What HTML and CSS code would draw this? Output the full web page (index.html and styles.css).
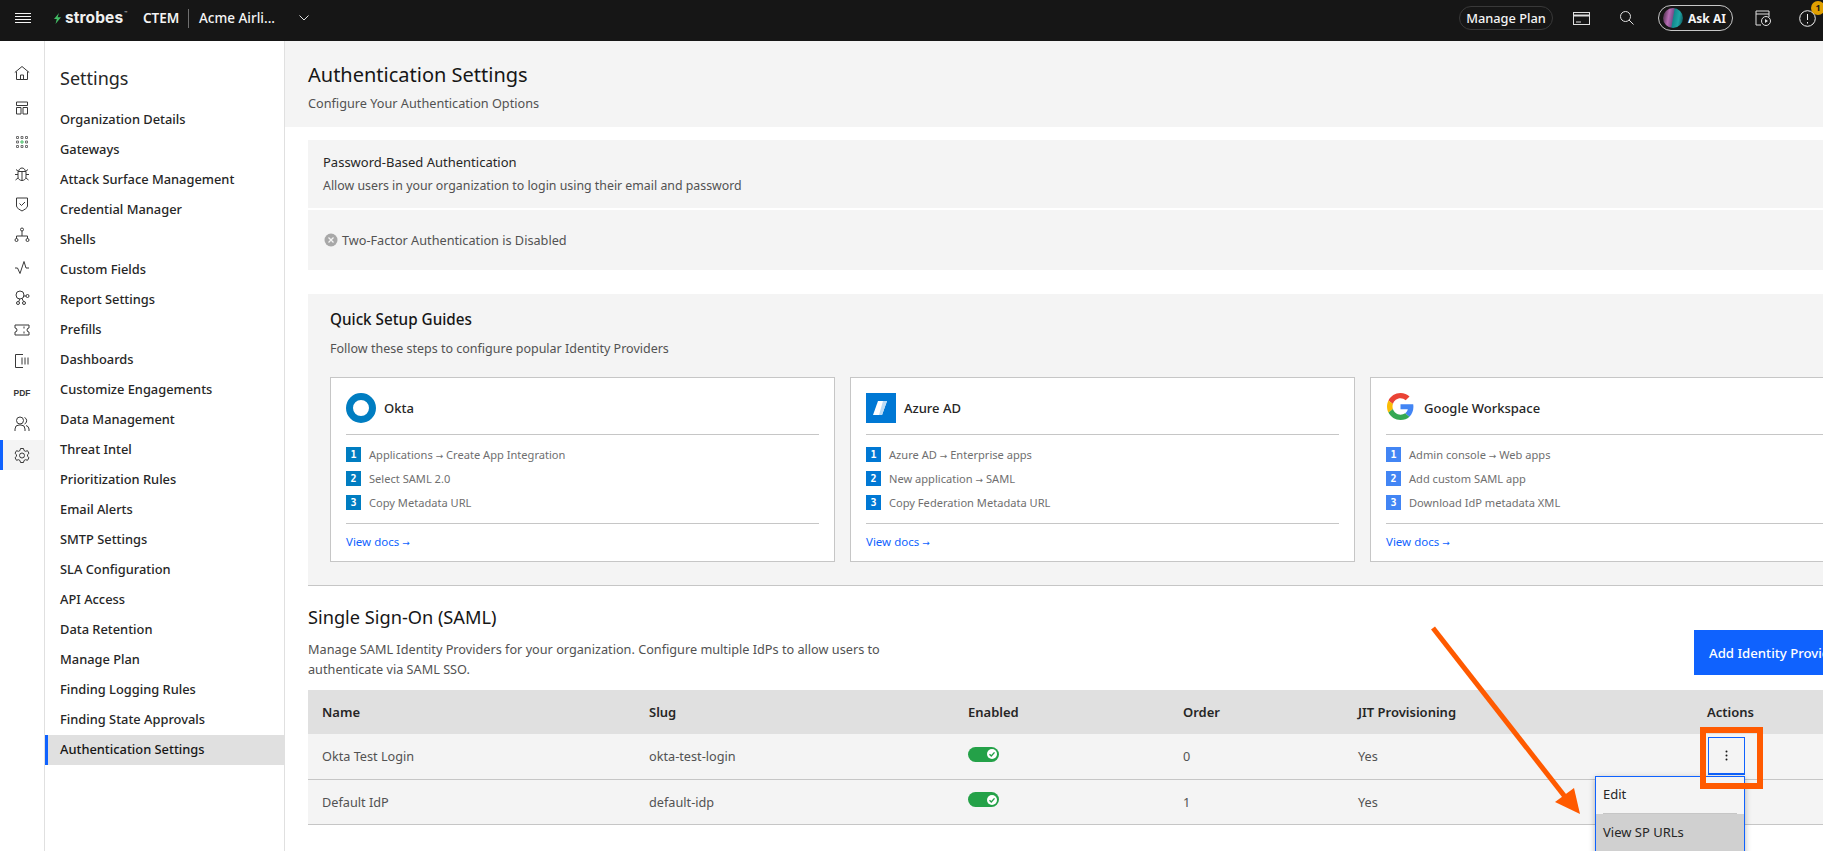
FILE: index.html
```html
<!DOCTYPE html>
<html lang="en">
<head>
<meta charset="utf-8">
<title>Authentication Settings</title>
<link rel="stylesheet" href="styles.css">
</head>
<body>
<div class="app">
  <header class="topbar">
    <div class="top-left">
      <svg class="burger" width="16" height="11" viewBox="0 0 16 11" fill="none" stroke="#f4f4f4"><path d="M0 .5h16M0 3.500h16M0 6.500h16M0 9.500h16"/></svg>
      <div class="logo">
        <svg width="7" height="11" viewBox="0 0 7 11"><path d="M5 0 3.600 4.300H7L1.500 11l1.300-5H0z" fill="#42be65"/></svg>
        <span class="logo-text">strobes</span>
        <span class="logo-tm">™</span>
      </div>
      <span class="product">CTEM</span>
      <span class="top-divider"></span>
      <span class="org">Acme Airli...</span>
      <svg class="chev" width="10" height="6" viewBox="0 0 10 6" fill="none" stroke="#e0e0e0"><path d="M.5.5 5 5 9.500.5"/></svg>
    </div>
    <div class="top-right">
      <button class="plan">Manage Plan</button>
      <svg class="ic-card" width="17" height="13" viewBox="0 0 17 13" fill="none" stroke="#e0e0e0"><rect x=".5" y=".5" width="16" height="12"/><path d="M1 3.500h15" stroke-width="2"/><path d="M3 10h5"/></svg>
      <svg class="ic-search" width="14" height="14" viewBox="0 0 14 14" fill="none" stroke="#e0e0e0"><circle cx="5.500" cy="5.500" r="5"/><path d="m9 9 4.500 4.500"/></svg>
      <button class="ask"><span class="orb"></span>Ask AI</button>
      <svg class="ic-play" width="16" height="16" viewBox="0 0 16 16" fill="none" stroke="#e0e0e0"><path d="M6 15H1V1h13v6M1 4h13"/><circle cx="11" cy="11" r="4.500"/><path d="M10 9v4l3-2z" fill="#e0e0e0" stroke="none"/></svg>
      <div class="alert">
        <svg width="17" height="17" viewBox="0 0 17 17" fill="none" stroke="#f4f4f4"><circle cx="8.500" cy="8.500" r="7.800"/><path d="M8.500 4v6M8.500 12v1.500"/></svg>
        <span class="badge">1</span>
      </div>
    </div>
  </header>

  <div class="body">
    <nav class="rail">
      <a class="rail-item rail-tall"><svg viewBox="0 0 16 16" fill="none" stroke="#393939"><path d="M.8 7.500 8 1.500l7.200 6M2.500 6.500v8h11v-8M6.500 14.500v-4.500h3v4.500"/></svg></a>
      <a class="rail-item rail-tall"><svg viewBox="0 0 16 16" fill="none" stroke="#393939"><path d="M2.500 2h11v3.500h-11zM2.500 7.500h4.500v6.500h-4.500zM9 7.500h4.500v6.500H9z"/></svg></a>
      <a class="rail-item rail-tall"><svg viewBox="0 0 16 16" fill="none" stroke="#6f6f6f"><path d="M2.500 2.500h2v2h-2zM7 2.500h2v2H7zM11.500 2.500h2v2h-2zM2.500 7h2v2h-2zM11.500 7h2v2h-2zM2.500 11.500h2v2h-2zM7 11.500h2v2H7zM11.500 11.500h2v2h-2z"/><path d="M7 7h2v2H7z" stroke="#42be65"/></svg></a>
      <a class="rail-item rail-short"><svg viewBox="0 0 16 16" fill="none" stroke="#393939"><path d="M4.500 5.500C5 3 6.500 2 8 2s3 1 3.500 3.500zM4 5.500h8v5.500c0 2-2 3.500-4 3.500s-4-1.500-4-3.500zM8 5.500v9M4 8.500H1M15 8.500h-3M4 12l-2.500 2M12 12l2.500 2M4.500 5.500 2 3.500M11.500 5.500l2.500-2"/></svg></a>
      <a class="rail-item"><svg viewBox="0 0 16 16" fill="none" stroke="#393939"><path d="M2.500 2h11v8c0 2-3 3.500-5.500 5-2.500-1.500-5.500-3-5.500-5z"/><path d="m5.500 7.500 2 2 3.500-3.500"/></svg></a>
      <a class="rail-item"><svg viewBox="0 0 16 16" fill="none" stroke="#393939"><circle cx="8" cy="2.500" r="1.500"/><circle cx="2.500" cy="13" r="1.500"/><circle cx="13.500" cy="13" r="1.500"/><path d="M8 4v5M2.500 11.500V9h11v2.500"/></svg></a>
      <a class="rail-item"><svg viewBox="0 0 16 16" fill="none" stroke="#393939"><path d="M1 9h2.500L6 14.500 10 2.500l2 6.500h3"/></svg></a>
      <a class="rail-item"><svg viewBox="0 0 16 16" fill="none" stroke="#393939"><circle cx="6" cy="5" r="4"/><circle cx="13.500" cy="6" r="1.500"/><circle cx="4" cy="13" r="1.500"/><circle cx="10" cy="13" r="1.500"/><path d="m5 11.500.5-2.500M9.500 11.500 8 8.500M9.500 6 12 6"/></svg></a>
      <a class="rail-item"><svg viewBox="0 0 16 16" fill="none" stroke="#393939"><path d="M1 3h14v3a2 2 0 0 0 0 4v3H1v-3a2 2 0 0 0 0-4zM10 4.500v2M10 9.500v2"/></svg></a>
      <a class="rail-item"><svg viewBox="0 0 16 16" fill="none" stroke="#393939"><path d="M9 14.500H1.500v-13H9M8 4.500v7M11 4.500v7M14 4.500v7"/></svg></a>
      <a class="rail-item rail-pdf">PDF</a>
      <a class="rail-item"><svg viewBox="0 0 16 16" fill="none" stroke="#393939"><circle cx="6" cy="4.500" r="3.500"/><path d="M1 15v-2a4 4 0 0 1 4-4h2a4 4 0 0 1 4 4v2M10.500 1.500a3.500 3.500 0 0 1 0 6.500M12 9.500a4 4 0 0 1 3 3.500v2"/></svg></a>
      <a class="rail-item rail-active"><svg viewBox="0 0 16 16" fill="none" stroke="#393939"><path d="m6.500 1.500h3l.5 2 1.500.8 2-.6 1.500 2.600-1.500 1.400v1.600l1.500 1.400-1.500 2.600-2-.6-1.500.8-.5 2h-3l-.5-2-1.500-.8-2 .6-1.500-2.600 1.500-1.400V7.700L1 6.300l1.500-2.600 2 .6L6 3.500z"/><circle cx="8" cy="8.500" r="2.500"/></svg></a>
    </nav>

    <aside class="settings-nav">
      <h2 class="settings-title">Settings</h2>
      <a class="nav-item">Organization Details</a>
      <a class="nav-item">Gateways</a>
      <a class="nav-item">Attack Surface Management</a>
      <a class="nav-item">Credential Manager</a>
      <a class="nav-item">Shells</a>
      <a class="nav-item">Custom Fields</a>
      <a class="nav-item">Report Settings</a>
      <a class="nav-item">Prefills</a>
      <a class="nav-item">Dashboards</a>
      <a class="nav-item">Customize Engagements</a>
      <a class="nav-item">Data Management</a>
      <a class="nav-item">Threat Intel</a>
      <a class="nav-item">Prioritization Rules</a>
      <a class="nav-item">Email Alerts</a>
      <a class="nav-item">SMTP Settings</a>
      <a class="nav-item">SLA Configuration</a>
      <a class="nav-item">API Access</a>
      <a class="nav-item">Data Retention</a>
      <a class="nav-item">Manage Plan</a>
      <a class="nav-item">Finding Logging Rules</a>
      <a class="nav-item">Finding State Approvals</a>
      <a class="nav-item nav-active">Authentication Settings</a>
    </aside>

    <main class="main">
      <div class="page-head">
        <h1 class="page-title">Authentication Settings</h1>
        <p class="page-sub">Configure Your Authentication Options</p>
      </div>
      <div class="content">
        <section class="password">
          <div class="pw-top">
            <div class="pw-title">Password-Based Authentication</div>
            <div class="pw-desc">Allow users in your organization to login using their email and password</div>
          </div>
          <div class="pw-bottom">
            <svg width="14" height="14" viewBox="0 0 14 14"><circle cx="7" cy="7" r="6.500" fill="#a8a8a8"/><path d="m4.500 4.500 5 5M9.500 4.500l-5 5" stroke="#f4f4f4" stroke-width="1.300"/></svg>
            <span>Two-Factor Authentication is Disabled</span>
          </div>
        </section>

        <section class="guides">
          <h3 class="guides-title">Quick Setup Guides</h3>
          <p class="guides-sub">Follow these steps to configure popular Identity Providers</p>
          <div class="cards">
            <article class="card">
              <div class="card-head">
                <span class="card-logo"><svg width="30" height="30" viewBox="0 0 30 30"><circle cx="15" cy="15" r="11.500" fill="none" stroke="#007dc1" stroke-width="7"/></svg></span>
                <span class="card-name">Okta</span>
              </div>
              <ol class="steps okta">
                <li><b>1</b><span>Applications <i class="arr">→</i> Create App Integration</span></li>
                <li><b>2</b><span>Select SAML 2.0</span></li>
                <li><b>3</b><span>Copy Metadata URL</span></li>
              </ol>
              <a class="docs">View docs <i class="arr">→</i></a>
            </article>
            <article class="card">
              <div class="card-head">
                <span class="card-logo"><svg width="30" height="30" viewBox="0 0 30 30"><rect width="30" height="30" fill="#0078d4"/><path d="M12 8h9l-5 14H7z" fill="#fff"/><path d="M17 8h4l-5 14h-3z" fill="#bcdcf5"/></svg></span>
                <span class="card-name">Azure AD</span>
              </div>
              <ol class="steps azure">
                <li><b>1</b><span>Azure AD <i class="arr">→</i> Enterprise apps</span></li>
                <li><b>2</b><span>New application <i class="arr">→</i> SAML</span></li>
                <li><b>3</b><span>Copy Federation Metadata URL</span></li>
              </ol>
              <a class="docs">View docs <i class="arr">→</i></a>
            </article>
            <article class="card">
              <div class="card-head">
                <span class="card-logo"><svg class="g-logo" width="27" height="27" viewBox="0 0 48 48"><path fill="#EA4335" d="M24 9.500c3.540 0 6.710 1.220 9.210 3.600l6.850-6.850C35.900 2.380 30.470 0 24 0 14.620 0 6.510 5.380 2.560 13.220l7.980 6.190C12.430 13.720 17.740 9.500 24 9.500z"/><path fill="#4285F4" d="M46.980 24.550c0-1.570-.15-3.090-.38-4.550H24v9.020h12.940c-.58 2.960-2.260 5.480-4.780 7.180l7.730 6c4.510-4.180 7.090-10.360 7.090-17.650z"/><path fill="#FBBC05" d="M10.530 28.590c-.48-1.450-.76-2.990-.76-4.590s.27-3.140.76-4.590l-7.980-6.190C.92 16.460 0 20.120 0 24c0 3.880.92 7.540 2.560 10.780l7.970-6.190z"/><path fill="#34A853" d="M24 48c6.480 0 11.930-2.130 15.890-5.810l-7.730-6c-2.150 1.450-4.920 2.300-8.160 2.300-6.260 0-11.570-4.220-13.470-9.910l-7.980 6.190C6.510 42.620 14.620 48 24 48z"/></svg></span>
                <span class="card-name">Google Workspace</span>
              </div>
              <ol class="steps google">
                <li><b>1</b><span>Admin console <i class="arr">→</i> Web apps</span></li>
                <li><b>2</b><span>Add custom SAML app</span></li>
                <li><b>3</b><span>Download IdP metadata XML</span></li>
              </ol>
              <a class="docs">View docs <i class="arr">→</i></a>
            </article>
          </div>
        </section>

        <section class="sso">
          <div class="sso-head">
            <div class="sso-text">
              <h2 class="sso-title">Single Sign-On (SAML)</h2>
              <p class="sso-desc">Manage SAML Identity Providers for your organization. Configure multiple IdPs to allow users to authenticate via SAML SSO.</p>
            </div>
            <button class="add-btn">Add Identity Provider</button>
          </div>
          <table class="idp">
            <thead>
              <tr>
                <th class="c-name">Name</th>
                <th class="c-slug">Slug</th>
                <th class="c-enabled">Enabled</th>
                <th class="c-order">Order</th>
                <th class="c-jit">JIT Provisioning</th>
                <th class="c-actions">Actions</th>
              </tr>
            </thead>
            <tbody>
              <tr>
                <td>Okta Test Login</td>
                <td>okta-test-login</td>
                <td><span class="toggle"><span class="knob"><svg width="10" height="10" viewBox="0 0 10 10" fill="none" stroke="#24a148" stroke-width="1.400"><path d="m2.500 5.200 1.800 1.800 3.200-3.600"/></svg></span></span></td>
                <td>0</td>
                <td>Yes</td>
                <td class="a-cell"><button class="kebab"><svg width="3" height="11" viewBox="0 0 3 11" fill="#161616"><circle cx="1.500" cy="1.500" r="1"/><circle cx="1.500" cy="5.500" r="1"/><circle cx="1.500" cy="9.500" r="1"/></svg></button></td>
              </tr>
              <tr>
                <td>Default IdP</td>
                <td>default-idp</td>
                <td><span class="toggle"><span class="knob"><svg width="10" height="10" viewBox="0 0 10 10" fill="none" stroke="#24a148" stroke-width="1.400"><path d="m2.500 5.200 1.800 1.800 3.200-3.600"/></svg></span></span></td>
                <td>1</td>
                <td>Yes</td>
                <td></td>
              </tr>
            </tbody>
          </table>
        </section>
      </div>
    </main>
  </div>

  <div class="menu">
    <div class="menu-item">Edit</div>
    <div class="menu-sep"></div>
    <div class="menu-item menu-hover">View SP URLs</div>
  </div>
  <span class="note-box"></span>
  <svg class="note-arrow" width="1823" height="851" viewBox="0 0 1823 851"><path d="M1433 628 1566 798" stroke="#ff5a00" stroke-width="5" fill="none"/><path d="M1580 814 1555 802 1574 788z" fill="#ff5a00"/></svg>
</div>
</body>
</html>
```

FILE: styles.css
```css
* { box-sizing: border-box; }
html, body { margin: 0; height: 851px; overflow: hidden; }
body { font-family: "Noto Sans", Roboto, sans-serif; color: #161616; background: #fff; font-size: 13px; }
h1, h2, h3, p, ol { margin: 0; padding: 0; }
button { font-family: inherit; }

.app { position: relative; width: 1823px; height: 851px; overflow: hidden; display: flex; flex-direction: column; }

.topbar { flex: none; height: 41px; padding-bottom: 5px; background: #161616; display: flex; justify-content: space-between; align-items: center; color: #f4f4f4; }
.top-left { display: flex; align-items: center; padding-left: 15px; }
.burger { margin-right: 23px; }
.logo { display: flex; align-items: center; gap: 4px; width: 89px; }
.logo-text { font: 700 15.500px/20px Inter, sans-serif; color: #f0f0f0; letter-spacing: .1px; }
.logo-tm { font-size: 4px; line-height: 4px; align-self: flex-start; margin: 3px 0 0 -3px; color: #c6c6c6; }
.product { font-size: 13.500px; font-weight: 600; width: 45px; }
.top-divider { width: 1px; height: 19px; background: #6f6f6f; margin-right: 10px; }
.org { font-size: 13.500px; font-weight: 500; width: 100px; }
.top-right { display: flex; align-items: center; }
.plan { width: 94px; height: 24px; border: 1px solid #393939; border-radius: 12px; background: transparent; color: #f4f4f4; font-size: 12.800px; font-weight: 500; padding: 0; margin-right: 20px; }
.ic-card { margin-right: 30px; }
.ic-search { margin-right: 24px; }
.ask { width: 75px; height: 26px; border: 1px solid #c6c6c6; border-radius: 13px; background: transparent; color: #f4f4f4; font-size: 12px; font-weight: 700; padding: 0 0 0 4px; display: flex; align-items: center; gap: 5px; margin-right: 22px; }
.orb { width: 20px; height: 20px; border-radius: 50%; background: linear-gradient(100deg, #3a2438 0%, #b86db5 30%, #7a4f8c 48%, #12888c 52%, #1fa6a6 75%, #0c4a50 100%); }
.ic-play { margin-right: 28px; }
.alert { position: relative; width: 24px; height: 17px; }
.badge { position: absolute; left: 12px; top: -9px; width: 14px; height: 14px; border-radius: 50%; background: #e0a000; color: #161616; font-size: 9px; font-weight: 700; line-height: 14px; text-align: center; }

.body { flex: 1; display: flex; min-height: 0; }

.rail { flex: none; width: 45px; border-right: 1px solid #e0e0e0; padding-top: 14.750px; display: flex; flex-direction: column; }
.rail-item { flex: none; width: 44px; height: 31.470px; display: flex; align-items: center; justify-content: center; }
.rail-tall { height: 34.500px; }
.rail-short { height: 29px; }
.rail-item svg { width: 16px; height: 16px; }
.rail-pdf { font: 700 8.500px/1 "Liberation Sans", sans-serif; color: #393939; }
.rail-active { height: 30px; background: #f4f4f4; border-left: 3px solid #0f62fe; padding-right: 3px; }

.settings-nav { flex: none; width: 240px; border-right: 1px solid #e0e0e0; padding-top: 25px; display: flex; flex-direction: column; }
.settings-title { font-size: 18px; font-weight: 400; line-height: 25px; color: #262626; padding-left: 15px; margin-bottom: 14px; }
.nav-item { height: 30px; line-height: 28px; padding-left: 15px; font-size: 12.850px; font-weight: 500; color: #262626; flex: none; }
.nav-active { background: #e0e0e0; border-left: 3px solid #0f62fe; padding-left: 12px; color: #161616; }

.main { flex: none; width: 1640px; }
.page-head { height: 86px; background: #f4f4f4; padding: 20px 0 0 23px; }
.page-title { font-size: 20px; font-weight: 400; line-height: 28px; color: #161616; }
.page-sub { font-size: 12.700px; line-height: 18px; color: #525252; margin-top: 5px; }

.content { padding: 13px 0 0 23px; }
.password { background: #f4f4f4; height: 130px; }
.pw-top { height: 70px; padding: 12px 15px 0; border-bottom: 2px solid #fff; }
.pw-title { font-size: 13px; line-height: 20px; color: #262626; }
.pw-desc { font-size: 12.350px; line-height: 20px; color: #525252; margin-top: 4px; }
.pw-bottom { display: flex; align-items: center; gap: 4px; padding: 20px 15px 0 16px; font-size: 12.700px; line-height: 20px; color: #525252; }

.guides { margin-top: 24px; height: 292px; background: #f4f4f4; border-bottom: 1px solid #c6c6c6; padding: 14px 0 0 22px; }
.guides-title { font-size: 15.250px; font-weight: 500; line-height: 22px; color: #161616; }
.guides-sub { font-size: 12.500px; line-height: 18px; color: #525252; margin-top: 10px; }
.cards { display: flex; gap: 15px; margin-top: 19px; }
.card { flex: none; width: 505px; height: 185px; background: #fff; border: 1px solid #c6c6c6; padding: 15px 15px 0; }
.card-head { display: flex; align-items: center; gap: 8px; height: 42px; padding-bottom: 12px; border-bottom: 1px solid #c6c6c6; }
.card-logo { display: flex; width: 30px; height: 30px; }
.g-logo { margin-left: 1px; }
.card-name { font-size: 13px; font-weight: 500; color: #262626; }
.steps { list-style: none; height: 89px; padding-top: 12px; border-bottom: 1px solid #c6c6c6; }
.steps li { display: flex; align-items: center; gap: 8px; height: 15px; margin-bottom: 9px; font-size: 11.100px; color: #6f6f6f; }
.steps b { flex: none; width: 15px; height: 15px; color: #fff; font: 700 10px/15px "DejaVu Sans Mono", monospace; text-align: center; }
.okta b { background: #007dc1; }
.azure b { background: #0078d4; }
.google b { background: #4285f4; }
.arr { font-family: "DejaVu Sans", sans-serif; font-style: normal; font-size: 9px; }
.docs { display: block; font-size: 11.500px; line-height: 18px; color: #0f62fe; margin-top: 9px; }

.sso { padding-top: 16px; }
.sso-head { display: flex; justify-content: space-between; align-items: flex-start; width: 1609px; height: 88px; }
.sso-title { font-size: 18.200px; font-weight: 400; line-height: 30px; color: #161616; }
.sso-desc { width: 600px; font-size: 12.700px; line-height: 20px; color: #525252; margin-top: 7px; }
.add-btn { margin-top: 28px; width: 200px; height: 45px; border: 0; background: #0f62fe; color: #fff; font-size: 13.200px; font-weight: 500; text-align: left; padding: 0 0 0 15px; flex: none; margin-right: 23px; }
.idp { border-collapse: collapse; table-layout: fixed; width: 1585px; }
.idp th { height: 44px; background: #e0e0e0; font-size: 13px; font-weight: 600; color: #262626; text-align: left; padding: 0 0 0 14px; }
.idp td { height: 45px; background: #f4f4f4; border-bottom: 1px solid #c6c6c6; font-size: 12.700px; color: #525252; padding: 0 0 0 14px; }
.c-name { width: 327px; }
.c-slug { width: 319px; }
.c-enabled { width: 215px; }
.c-order { width: 175px; }
.c-jit { width: 349px; }
.toggle { display: block; position: relative; top: -2px; width: 31px; height: 15px; border-radius: 8px; background: #24a148; }
.knob { position: absolute; right: 2px; top: 2.500px; width: 10px; height: 10px; border-radius: 50%; background: #fff; display: flex; align-items: center; justify-content: center; }
.kebab { display: flex; align-items: center; justify-content: center; width: 37px; height: 38px; margin-left: 1px; background: #f4f4f4; border: 1px solid #0f62fe; border-bottom-width: 2px; padding: 0; }
.a-cell { vertical-align: middle; }

.menu { position: absolute; left: 1595px; top: 776px; width: 150px; height: 90px; background: #f4f4f4; border: 1px solid #0f62fe; box-shadow: 0 2px 6px rgba(0,0,0,.3); }
.menu-item { height: 36px; line-height: 34px; padding-left: 7px; font-size: 13px; color: #262626; }
.menu-sep { height: 1px; margin: 0 7px; background: #c6c6c6; }
.menu-hover { background: #d0d0d0; height: 60px; line-height: 36px; }
.note-box { position: absolute; left: 1700px; top: 727px; width: 63px; height: 62px; border: 6px solid #ff5a00; }
.note-arrow { position: absolute; left: 0; top: 0; pointer-events: none; }
```
